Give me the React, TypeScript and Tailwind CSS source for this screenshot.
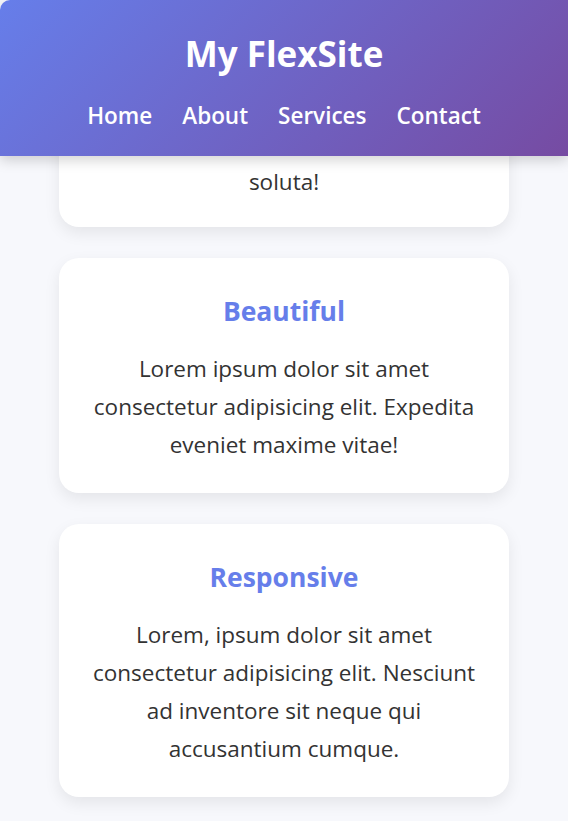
import React from "react";

const cards = [
  {
    title: "Beautiful",
    lines: [
      "Lorem ipsum dolor sit amet",
      "consectetur adipisicing elit. Expedita",
      "eveniet maxime vitae!",
    ],
  },
  {
    title: "Responsive",
    lines: [
      "Lorem, ipsum dolor sit amet",
      "consectetur adipisicing elit. Nesciunt",
      "ad inventore sit neque qui",
      "accusantium cumque.",
    ],
  },
];

const navLinks = ["Home", "About", "Services", "Contact"];

const App = () => {
  return (
    <div className="min-h-screen bg-[#f7f8fc] font-['Open_Sans',sans-serif] text-[#333] overflow-hidden">
      <header className="relative z-10 rounded-tl-[10px] bg-[linear-gradient(135deg,#667eea_0%,#764ba2_100%)] pt-[33px] pb-[25px] text-white shadow-[0_4px_14px_rgba(0,0,0,0.18)]">
        <h1 className="text-center text-[35px] font-bold leading-[42px]">My FlexSite</h1>
        <nav className="mt-[26px] flex justify-center gap-[30px]">
          {navLinks.map((link) => (
            <a key={link} href="#" className="text-[22.5px] font-semibold leading-[30px]">
              {link}
            </a>
          ))}
        </nav>
      </header>

      <main className="flex flex-col gap-[31px] px-[59px] pb-10">
        <div className="-mt-[40px] rounded-[20px] bg-white pt-[47px] pb-[26px] text-center shadow-[0_6px_16px_rgba(0,0,0,0.08)]">
          <p className="text-[22.5px] leading-[38px]">soluta!</p>
        </div>

        {cards.map((card) => (
          <div
            key={card.title}
            className="rounded-[20px] bg-white px-4 pt-[37px] pb-[29px] text-center shadow-[0_6px_16px_rgba(0,0,0,0.08)]"
          >
            <h2 className="text-[26.5px] font-bold leading-[32px] text-[#667eea]">{card.title}</h2>
            <p className="mt-[23px] text-[22.5px] leading-[38px] whitespace-nowrap">
              {card.lines.map((line, i) => (
                <React.Fragment key={i}>
                  {line}
                  {i < card.lines.length - 1 && <br />}
                </React.Fragment>
              ))}
            </p>
          </div>
        ))}
      </main>
    </div>
  );
};

export default App;
